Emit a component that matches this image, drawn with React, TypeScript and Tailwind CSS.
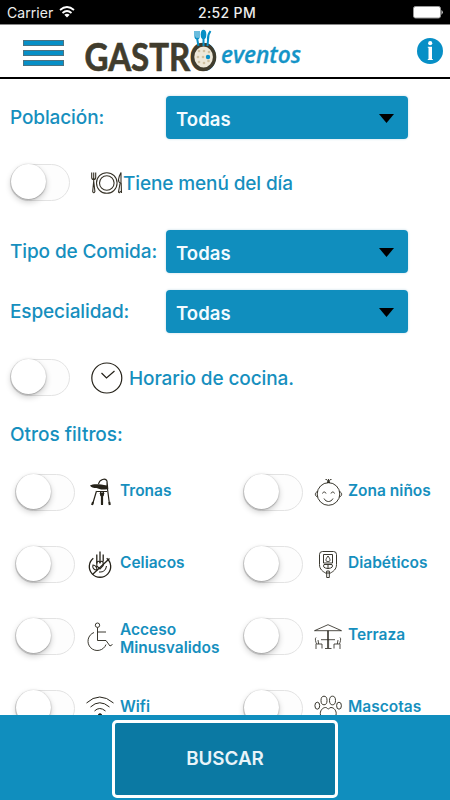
import type { ReactNode } from "react";

function Toggle() {
  return (
    <div className="relative h-[37px] w-[60px] shrink-0 rounded-full border-[1.5px] border-[#e3e3e3] bg-[#fdfdfd]">
      <div className="absolute -left-[0.5px] -top-px size-[35px] rounded-full bg-white shadow-[0_3px_6px_rgba(0,0,0,0.2),0_0.5px_1.5px_rgba(0,0,0,0.4)]" />
    </div>
  );
}

function Select() {
  return (
    <button className="flex h-[43px] w-[242px] shrink-0 items-center justify-between rounded-[4px] bg-[#108ebe] pl-[10px] pr-[14px] pt-[4px] text-left text-[18.5px] font-semibold tracking-[0.05px] text-[#f3fbff] shadow-[0_0_2px_1px_#e4eff4]">
      Todas
      <svg width="15" height="9" viewBox="0 0 15 9" className="-mt-[3px]">
        <path d="M0 0h15L7.5 9z" fill="#000" />
      </svg>
    </button>
  );
}

function Field({ label, className }: { label: string; className: string }) {
  return (
    <div className={`flex h-[43px] items-center ${className}`}>
      <span className="w-[156px] shrink-0 whitespace-nowrap pt-[2px] text-[19px] font-medium tracking-[-0.12px]">{label}</span>
      <Select />
    </div>
  );
}

function Icon({ children }: { children: ReactNode }) {
  return (
    <svg width="30" height="30" viewBox="0 0 30 30" fill="none" stroke="#252219" strokeWidth="0.9" className="shrink-0">
      {children}
    </svg>
  );
}

const highChair = (
  <Icon>
    <path d="M13.500 7c1-4.500 7-6.500 8.500-3l.8 8M22 4v8" strokeWidth="1.100" />
    <path d="M5 8.500c3-1.700 9-1.500 17 0v3.800c-5 .8-8 0-10.500-1.200-3 0-5.500-.8-6.500-2.600z" fill="#252219" stroke="none" />
    <path d="m11.500 14-4 13.500M22.500 12l2 15.500M15.500 15l1 5v7.500M18.500 15l-1 5v7.500M12 14.500h10" strokeWidth="1.200" />
    <path d="M15 16h4l-1 3h-2z" fill="#252219" />
    <path d="m8 25-1 3M17 25.500v2.500M24.300 25l.5 3" strokeWidth="2" />
  </Icon>
);

const glutenFree = (
  <Icon>
    <path d="M8.300 9.200a10.700 10.700 0 1 0 13.400 0" strokeWidth="1.300" />
    <path d="M7.500 25.500 24.500 9.500" strokeWidth="1.300" />
    <path d="M15 2.500v11M11.800 5.500v9M18.200 5.500v7" strokeWidth="1.300" />
    <path d="M11.800 14.500c0-3 3.200-3 3.200 0 0-3 3.200-3 3.200 0v2l-3.200 3.500-3.200-3zM8 16c2 0 4 2 4 5-3 0-5-2-4-5zM14 23c4 .5 7-2 7.500-6" strokeWidth="1.100" />
  </Icon>
);

const child = (
  <Icon>
    <circle cx="15.500" cy="17" r="11.300" />
    <path d="M4.600 14.500c-3 1-3 4.500 0 5.500M26.400 14.500c3 1 3 4.500 0 5.500M9.500 16.500c.5-2 3-2 3.500 0M18 16.500c.5-2 3-2 3.500 0M11 21.500c2 4 7 4 9 0M12.500 2.500c2.500-.5 2 2 2 3.500M15.500 2v4M18.500 2.500c-2.500-.5-2 2-2 3.500" />
  </Icon>
);

const glucometer = (
  <Icon>
    <path d="M9.500 2.500h11q3 0 3 3v10c0 5-3.500 7-6 8.500h-5c-2.500-1.500-6-3.500-6-8.500v-10q0-3 3-3z" />
    <path d="M10.500 5.500h9v8.500h-9zM15 7c-3 4-2.500 5.500 0 5.500s3-1.500 0-5.500zM11 15.500h8q2 3.500-4 4-6-.5-4-4zM15 15.500v4M13.700 28.500v-6.500h2.600v6.500z" />
  </Icon>
);

const wheelchair = (
  <Icon>
    <circle cx="12.500" cy="4.200" r="2.200" />
    <path d="M12.500 6.500v13h8.500l4 5.500 2.500-1.500M12.500 11h8.500M9 11.500a9.300 9.300 0 1 0 12 12" />
  </Icon>
);

const terrace = (
  <Icon>
    <path d="M1.500 9.700 15 3.700l13.500 6zM14.600 9.700v9h.8v-9M8 18.700h14M14.600 18.700v8.500M15.600 18.700v8.500M12 27.500h6.500M3 16.500c-1.500 1 0 5 .5 6.500H9v4.500M3 23v5M5 19l.7 4M27 16.500c1.500 1 0 5-.5 6.500H21v4.500M27 23v5M25 19l-.7 4" strokeWidth=".8" />
  </Icon>
);

const wifi = (
  <Icon>
    <path d="M1.500 10q13-12 27 0M5.500 14q9-8.500 19 0M9.500 18q5-5 11 0" strokeWidth="1" />
    <circle cx="15" cy="22.500" r="1.800" fill="#252219" />
  </Icon>
);

const paw = (
  <Icon>
    <ellipse cx="11" cy="7.500" rx="3" ry="4.300" />
    <ellipse cx="19.500" cy="7.500" rx="3" ry="4.300" />
    <ellipse cx="4.300" cy="12.700" rx="2.400" ry="3.500" />
    <ellipse cx="26" cy="12.700" rx="2.400" ry="3.500" />
    <path d="M7.500 22c-1-4 2-7.500 5-7.500 1.700 0 2 1.500 2.800 1.500s1-1.500 2.700-1.500c3 0 6 3.500 5 7.500-2 5-13.500 5-15.500 0z" />
  </Icon>
);

const filters: { label: string; icon: ReactNode }[] = [
  { label: "Tronas", icon: highChair },
  { label: "Zona niños", icon: child },
  { label: "Celiacos", icon: glutenFree },
  { label: "Diabéticos", icon: glucometer },
  { label: "Acceso Minusvalidos", icon: wheelchair },
  { label: "Terraza", icon: terrace },
  { label: "Wifi", icon: wifi },
  { label: "Mascotas", icon: paw },
];

function StatusBar() {
  return (
    <div className="grid h-6 shrink-0 grid-cols-3 items-center bg-black pl-[7px] pr-[7px] text-[14px] text-[#eee]">
      <div className="flex items-center gap-[6px]">
        <span className="tracking-[0.05px]">Carrier</span>
        <svg width="16" height="12" viewBox="0 0 16 12" fill="none" stroke="#fff" strokeWidth="1.800">
          <path d="M1 4q7-6 14 0M3.500 7q4.500-4 9 0" />
          <path d="m5.300 8.800 2.700 2.700 2.700-2.700q-2.700-2-5.400 0z" fill="#fff" stroke="none" />
        </svg>
      </div>
      <span className="whitespace-nowrap pl-[4px] text-center font-medium tracking-[0.35px]">2:52 PM</span>
      <svg width="31" height="13" viewBox="0 0 31 13" className="justify-self-end">
        <rect x="1.500" y=".5" width="27" height="11.500" rx="2" fill="#fff" stroke="#999" />
        <path d="M29.500 4q2.500 2 0 5z" fill="#ddd" />
      </svg>
    </div>
  );
}

function Logo() {
  return (
    <svg width="224" height="52" viewBox="82 25 224 52" className="ml-[18px] shrink-0 overflow-visible">
      <text x="84.500" y="70.500" fontFamily="Lato, sans-serif" fontSize="37.500" fontWeight="700" fill="#403c2d" stroke="#403c2d" strokeWidth=".7" textLength="132" lengthAdjust="spacingAndGlyphs">GASTRO</text>
      <ellipse cx="203.600" cy="57" rx="11" ry="12.300" fill="#eee8d8" stroke="#403c2d" strokeWidth="3.400" />
      <g fill="#cfc1a1">
        <circle cx="199" cy="51" r="1.300" /><circle cx="204" cy="51" r="1.300" /><circle cx="209" cy="52" r="1.300" />
        <circle cx="198" cy="57" r="1.300" /><circle cx="203" cy="57" r="1.300" />
        <circle cx="199" cy="62" r="1.300" /><circle cx="204" cy="63" r="1.300" /><circle cx="208.500" cy="61" r="1.300" />
      </g>
      <circle cx="208" cy="57" r="2.200" fill="#078fc6" />
      <g fill="none" stroke="#078fc6" strokeWidth="1.200">
        <path d="M195 31v5q0 3 2.200 3T199 36v-5M197 31v8" />
        <path d="m197 38 1.500 8M203.500 38v8M210.500 31q-3 4-2.500 9l-.5 6" strokeWidth="2" />
      </g>
      <ellipse cx="203.500" cy="34.500" rx="2.800" ry="4.700" fill="#078fc6" />
      <text x="221" y="63" fontFamily="Open Sans, sans-serif" fontSize="24" fontWeight="600" fontStyle="italic" fill="#1494c7" stroke="#1494c7" strokeWidth=".3" textLength="80" lengthAdjust="spacingAndGlyphs">eventos</text>
    </svg>
  );
}

export default function App() {
  return (
    <div className="flex h-[800px] w-[450px] flex-col overflow-hidden bg-white font-['Inter','Liberation_Sans',sans-serif] text-[#168fbe]">
      <StatusBar />
      <header className="flex h-[55px] shrink-0 items-center border-b-2 border-t border-b-black border-t-[#888] pl-[23px] pr-[7px]">
        <div className="mt-[3px] flex w-[41px] shrink-0 flex-col gap-[4px]">
          <span className="h-[6px] border border-[#4c7382] bg-[#078fc6]" />
          <span className="h-[6px] border border-[#4c7382] bg-[#078fc6]" />
          <span className="h-[6px] border border-[#4c7382] bg-[#078fc6]" />
        </div>
        <Logo />
        <svg width="26" height="26" viewBox="0 0 26 26" className="ml-auto shrink-0">
          <circle cx="13" cy="13" r="13" fill="#078fc6" />
          <circle cx="13.200" cy="5.200" r="2.100" fill="#fff" />
          <path d="M10.800 8.800H15v12.200h.8v1h-5v-1h.7V9.800h-.7z" fill="#fff" />
        </svg>
      </header>
      <main className="min-h-0 flex-1 overflow-hidden pl-[10px] pt-[17px]">
        <Field label="Población:" className="" />
        <div className="mt-[25px] flex h-[37px] items-center">
          <Toggle />
          <svg width="32" height="24" viewBox="0 0 32 24" fill="none" stroke="#353126" strokeWidth="1.100" className="ml-[21px] shrink-0">
            <circle cx="15.800" cy="12" r="10.300" />
            <circle cx="15.800" cy="12" r="7.300" />
            <path d="M.7 1.500v5q0 2 2 2t2-2v-5M2.700 1.500V10l-1 10.500q1 2.500 2.200 0L2.700 10M30.500 22l-.3-9.500q-3-1-2.700-4t2.500-7v11M29 12.500l-1.500 8.500q1 2 2-1" />
          </svg>
          <span className="whitespace-nowrap pt-[3px] text-[19px] font-medium tracking-[-0.12px]">Tiene menú del día</span>
        </div>
        <Field label="Tipo de Comida:" className="mt-[29px]" />
        <Field label="Especialidad:" className="mt-[17px]" />
        <div className="mt-[26px] flex h-[37px] items-center">
          <Toggle />
          <svg width="32" height="32" viewBox="0 0 32 32" fill="none" stroke="#252219" className="ml-[21px] shrink-0">
            <circle cx="15.800" cy="16" r="15" strokeWidth="1.200" />
            <path d="m10.500 11 5 5 8-7" strokeWidth="1.200" />
          </svg>
          <span className="ml-[6px] whitespace-nowrap pt-[3px] text-[19px] font-medium tracking-[-0.1px]">Horario de cocina.</span>
        </div>
        <h2 className="mt-[27px] h-6 text-[19px] font-medium leading-6">Otros filtros:</h2>
        <div className="mt-[27px] grid auto-rows-[37px] grid-cols-[228px_1fr] gap-y-[35px] pl-[5px]">
          {filters.map(({ label, icon }) => (
            <div key={label} className="flex items-start">
              <Toggle />
              <div className="ml-[10px] mt-[3px] w-[30px] shrink-0">{icon}</div>
              <span className={`ml-[5px] w-[102px] text-[15.5px] font-semibold leading-[18px] ${label.startsWith("Acceso") ? "mt-[3px]" : "mt-[8px]"}`}>{label}</span>
            </div>
          ))}
        </div>
      </main>
      <footer className="flex h-[85px] shrink-0 justify-center bg-[#108ebe] pt-[5px]">
        <button className="h-[78px] w-[226px] rounded-[5px] border-[3px] border-white bg-[#0b79a3] text-[18.8px] font-semibold text-[#e8f4f9]">
          BUSCAR
        </button>
      </footer>
    </div>
  );
}
